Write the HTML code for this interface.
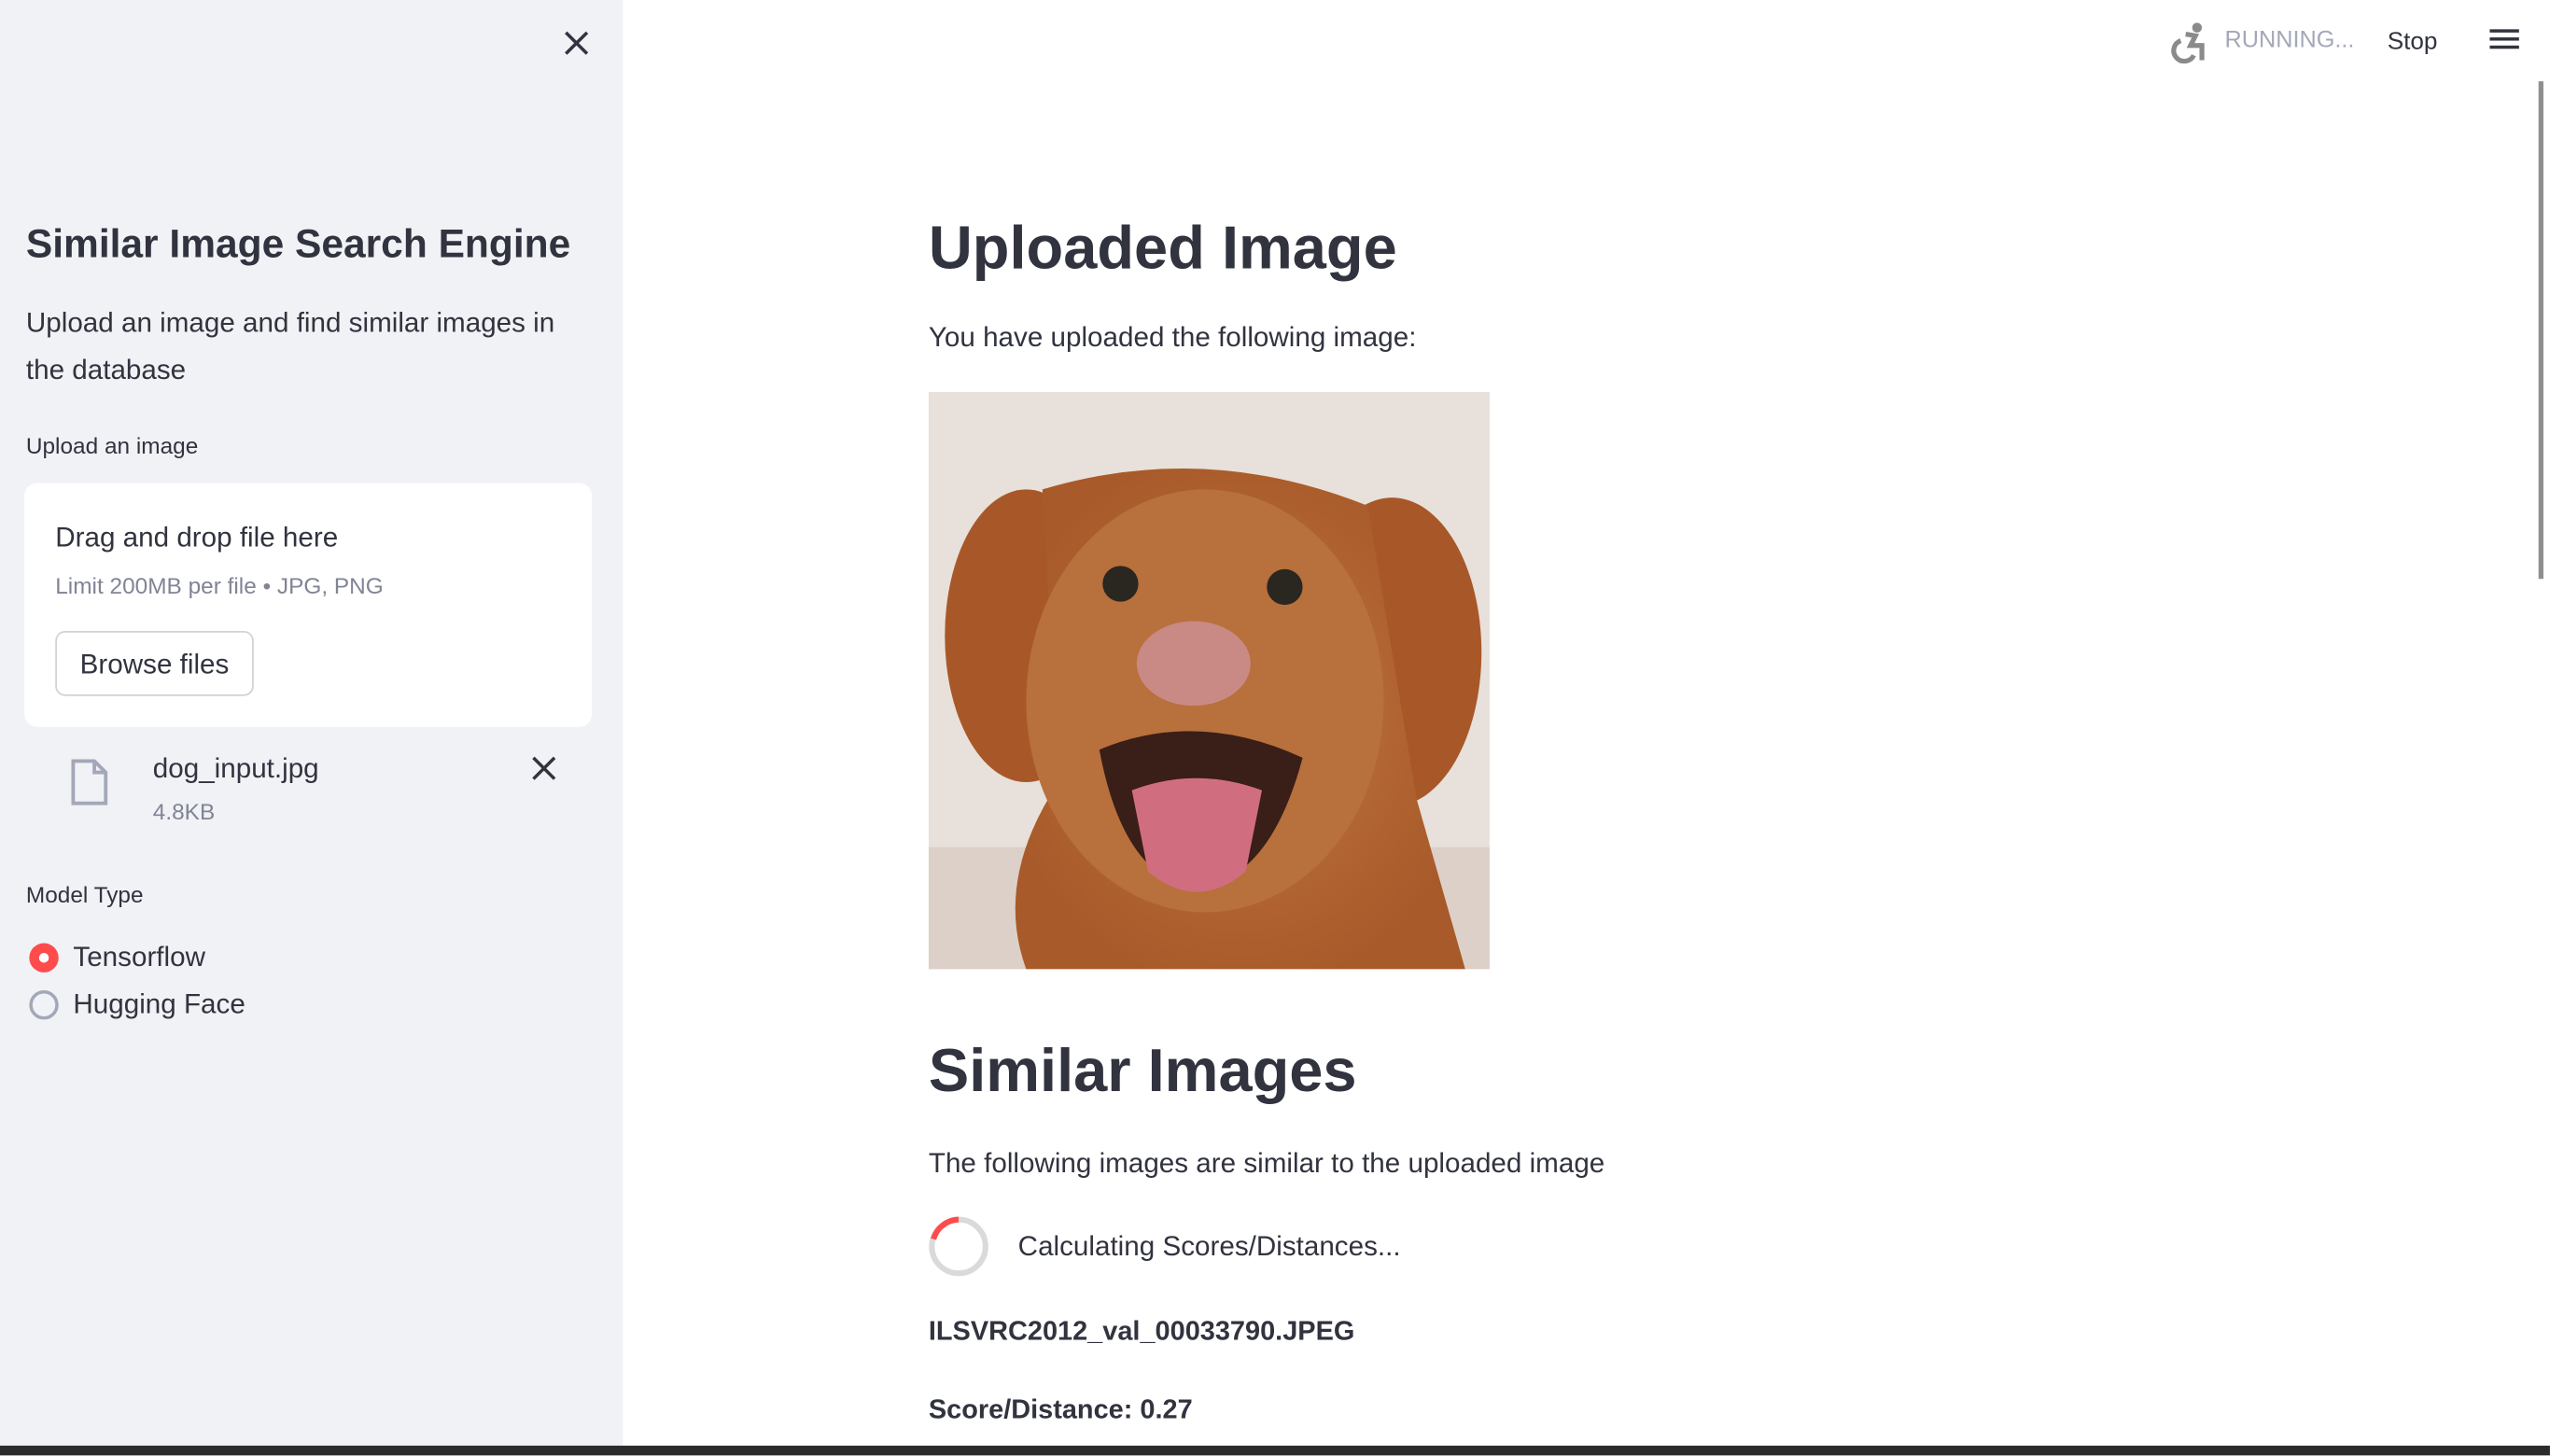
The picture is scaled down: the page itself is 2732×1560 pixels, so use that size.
<!DOCTYPE html>
<html><head><meta charset="utf-8"><style>
*{margin:0;padding:0;box-sizing:border-box}
html,body{width:2732px;height:1560px;overflow:hidden;background:#fff}
#w{position:absolute;left:0;top:0;width:1568px;height:895px;transform:scale(1.7423);transform-origin:0 0;font-family:"Liberation Sans",sans-serif;color:#31333f}
.a{position:absolute;white-space:nowrap}
#sb{position:absolute;left:0;top:0;width:383px;height:890px;background:#f0f2f6}
</style></head><body><div id="w">
<div id="sb"></div>
<svg class="a" style="left:346px;top:18px" width="17" height="17" viewBox="0 0 17 17"><path d="M2 2L15 15M15 2L2 15" stroke="#31333f" stroke-width="2"/></svg>
<div class="a" style="left:16px;top:137px;font-size:24.4px;font-weight:bold">Similar Image Search Engine</div>
<div class="a" style="left:16px;top:184px;font-size:17px;line-height:29px">Upload an image and find similar images in<br>the database</div>
<div class="a" style="left:16px;top:266px;font-size:14px">Upload an image</div>
<div class="a" style="left:15px;top:297px;width:349px;height:150px;background:#fff;border-radius:8px"></div>
<div class="a" style="left:34px;top:321px;font-size:17px">Drag and drop file here</div>
<div class="a" style="left:34px;top:352px;font-size:14px;color:#808495">Limit 200MB per file • JPG, PNG</div>
<div class="a" style="left:34px;top:388px;width:122px;height:40px;border:1px solid #d0d2d8;border-radius:6px;font-size:17px;line-height:39px;text-align:center;background:#fff">Browse files</div>
<svg class="a" style="left:42px;top:466px" width="26" height="30" viewBox="0 0 26 30"><path d="M3 2H16L23 9V28H3Z M16 2V9H23" fill="none" stroke="#a3a8b8" stroke-width="2.2"/></svg>
<div class="a" style="left:94px;top:463px;font-size:17px">dog_input.jpg</div>
<div class="a" style="left:94px;top:491px;font-size:14px;color:#808495">4.8KB</div>
<svg class="a" style="left:327px;top:465px" width="15" height="15" viewBox="0 0 15 15"><path d="M1 1L14 14M14 1L1 14" stroke="#31333f" stroke-width="2"/></svg>
<div class="a" style="left:16px;top:542px;font-size:14px">Model Type</div>
<div class="a" style="left:18px;top:580px;width:18px;height:18px;border-radius:50%;background:#ff4b4b"></div>
<div class="a" style="left:24px;top:586px;width:6px;height:6px;border-radius:50%;background:#fff"></div>
<div class="a" style="left:45px;top:579px;font-size:17px">Tensorflow</div>
<div class="a" style="left:18px;top:609px;width:18px;height:18px;border-radius:50%;border:2px solid #a3a8b8"></div>
<div class="a" style="left:45px;top:608px;font-size:17px">Hugging Face</div>

<svg class="a" style="left:1334px;top:13px" width="24" height="26" viewBox="0 0 24 26"><circle cx="17" cy="4" r="3" fill="#8b8b8b"/><path d="M10 8L16 9L13 15H20V24" fill="none" stroke="#8b8b8b" stroke-width="3"/><path d="M7 12A6.5 6.5 0 1 0 15 21" fill="none" stroke="#8b8b8b" stroke-width="3"/></svg>
<div class="a" style="left:1368px;top:17px;font-size:14.5px;color:#a3a8b8">RUNNING...</div>
<div class="a" style="left:1468px;top:17px;font-size:15px">Stop</div>
<div class="a" style="left:1531px;top:18px;width:18px;height:2px;background:#31333f;box-shadow:0 5px 0 #31333f,0 10px 0 #31333f"></div>
<div class="a" style="left:1561px;top:50px;width:3px;height:306px;background:#8f8f8f"></div>

<div class="a" style="left:571px;top:131px;font-size:37.3px;font-weight:bold">Uploaded Image</div>
<div class="a" style="left:571px;top:198px;font-size:17px">You have uploaded the following image:</div>
<svg class="a" style="left:571px;top:241px" width="345" height="355" viewBox="0 0 345 355">
<defs><radialGradient id="f" cx="50%" cy="50%" r="55%"><stop offset="0" stop-color="#c0763e"/><stop offset="1" stop-color="#a85a2a"/></radialGradient></defs>
<rect width="345" height="355" fill="#e8e0da"/>
<rect y="280" width="345" height="75" fill="#dcd0c8"/>
<ellipse cx="60" cy="150" rx="50" ry="90" fill="#a85828"/>
<ellipse cx="285" cy="160" rx="55" ry="95" fill="#a85828"/>
<path d="M70 60Q170 30 270 70L300 250Q330 355 330 355H60Q40 300 80 240Z" fill="url(#f)"/>
<ellipse cx="170" cy="190" rx="110" ry="130" fill="#b8703c"/>
<circle cx="118" cy="118" r="11" fill="#2a2620"/><circle cx="219" cy="120" r="11" fill="#2a2620"/>
<ellipse cx="163" cy="167" rx="35" ry="26" fill="#c98a86"/>
<path d="M105 220Q165 195 230 225Q210 300 165 305Q120 300 105 220Z" fill="#3a1e18"/>
<path d="M125 245Q165 230 205 245L195 295Q165 320 135 295Z" fill="#d06e80"/>
</svg>
<div class="a" style="left:571px;top:637px;font-size:37.3px;font-weight:bold">Similar Images</div>
<div class="a" style="left:571px;top:706px;font-size:17px">The following images are similar to the uploaded image</div>
<svg class="a" style="left:570px;top:747px" width="39" height="39" viewBox="0 0 39 39"><circle cx="19.5" cy="19.5" r="16.5" fill="none" stroke="#dadada" stroke-width="3.5"/><path d="M4 15A16.5 16.5 0 0 1 19.5 3" fill="none" stroke="#ff4b4b" stroke-width="3.5"/></svg>
<div class="a" style="left:626px;top:757px;font-size:17px">Calculating Scores/Distances...</div>
<div class="a" style="left:571px;top:809px;font-size:16.6px;font-weight:bold">ILSVRC2012_val_00033790.JPEG</div>
<div class="a" style="left:571px;top:857px;font-size:16.6px;font-weight:bold">Score/Distance: 0.27</div>
<div class="a" style="left:0;top:889px;width:1568px;height:6px;background:#2b2b2b"></div>
</div></body></html>
